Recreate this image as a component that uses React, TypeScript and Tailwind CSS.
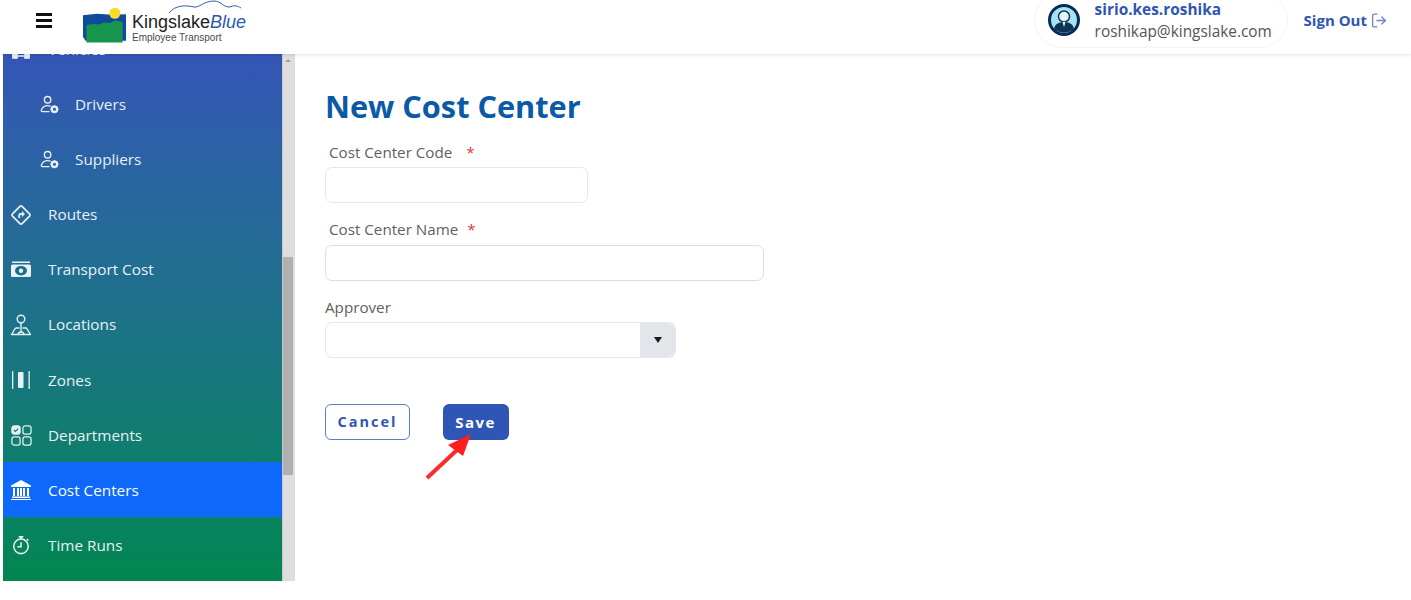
import { LogOut } from 'lucide-react';

function PersonGear() {
  return (
    <svg viewBox="0 0 20 20" className="h-[19px] w-[19px] shrink-0" fill="none" stroke="currentColor" strokeWidth="1.400">
      <circle cx="8" cy="5" r="3.400" />
      <path d="M9.500 17.500H2.600c-1 0-1.500-.7-1.100-1.700C2.400 13.100 5 11.100 8 11.100c1 0 1.900.2 2.700.5" strokeLinecap="round" />
      <circle cx="15.200" cy="15" r="2.800" strokeWidth="2.200" />
      <path d="M15.200 10.700v1.500M15.200 17.800v1.500M10.900 15h1.500M18 15h1.500M12.200 12l1 1M17.200 17l1 1M12.200 18l1-1M17.200 13l1-1" strokeWidth="1.600" />
    </svg>
  );
}

function RouteIcon() {
  return (
    <svg viewBox="0 0 22 22" className="h-[22px] w-[22px]" fill="none" stroke="currentColor" strokeWidth="1.700">
      <rect x="4.200" y="4.200" width="13.600" height="13.600" rx="1.500" transform="rotate(45 11 11)" />
      <path d="M9.200 14v-2.500c0-1 .6-1.500 1.500-1.500H12.500" strokeWidth="1.800" />
      <path d="M12 7l3 3-3 3z" fill="currentColor" stroke="none" />
    </svg>
  );
}

function CostIcon() {
  return (
    <svg viewBox="0 0 22 18" className="h-[18px] w-[22px]" fill="none">
      <rect x="2" y="0.500" width="18" height="1.500" fill="currentColor" />
      <rect x="1" y="3.500" width="20" height="12.500" rx="1.500" fill="currentColor" />
      <ellipse cx="11" cy="9.700" rx="6" ry="4.800" fill="#1d6c8e" />
      <circle cx="11" cy="9.700" r="2.200" fill="currentColor" />
    </svg>
  );
}

function LocationIcon() {
  return (
    <svg viewBox="0 0 22 22" className="h-[22px] w-[22px]" fill="none" stroke="currentColor" strokeWidth="1.400">
      <circle cx="11" cy="5" r="3.800" />
      <path d="M11 9v9" />
      <path d="M5.500 14h4M12.500 14H16.500L20.500 20.500H1.500L5.500 14" strokeLinejoin="round" />
      <path d="M8 20.500c.2-1.500 1.500-2.500 3-2.500s2.800 1 3 2.500" />
    </svg>
  );
}

function ZonesIcon() {
  return (
    <svg viewBox="0 0 22 22" className="h-[22px] w-[22px]" fill="currentColor">
      <rect x="2" y="2" width="1.300" height="18" rx=".5" />
      <rect x="8" y="3" width="5.500" height="16" rx="1" />
      <rect x="18.500" y="2" width="1.300" height="18" rx=".5" />
    </svg>
  );
}

function DeptIcon() {
  return (
    <svg viewBox="0 0 22 22" className="h-[21px] w-[21px]" fill="none" stroke="currentColor" strokeWidth="1.300">
      <rect x="1" y="1" width="8.500" height="8.500" rx="2.200" fill="currentColor" />
      <path d="M3 5.200l1.700 1.600L7.500 3.700" stroke="#177368" strokeWidth="1.200" />
      <rect x="12.500" y="1" width="8.500" height="8.500" rx="2.200" />
      <rect x="1" y="12.500" width="8.500" height="8.500" rx="2.200" />
      <rect x="12.500" y="12.500" width="8.500" height="8.500" rx="2.200" />
    </svg>
  );
}

function BankIcon() {
  return (
    <svg viewBox="0 0 22 22" className="h-[22px] w-[22px]" fill="currentColor">
      <path d="M11 1L21 6.500V8H1V6.500z" />
      <rect x="3" y="9" width="2" height="8" />
      <rect x="7" y="9" width="2" height="8" />
      <rect x="10" y="9" width="2" height="8" />
      <rect x="13" y="9" width="2" height="8" />
      <rect x="17" y="9" width="2" height="8" />
      <rect x="2" y="17.500" width="18" height="1.500" />
      <rect x="1" y="20" width="20" height="1" />
    </svg>
  );
}

function TimerIcon() {
  return (
    <svg viewBox="0 0 22 22" className="h-[20px] w-[20px]" fill="none" stroke="currentColor" strokeWidth="1.700">
      <circle cx="11" cy="12.500" r="8" />
      <path d="M11 8v5H7" />
      <path d="M8.500 2h5M11 2v2.500M17.500 4.500l1.500 1.500" strokeWidth="1.800" />
    </svg>
  );
}

function CartIcon() {
  return (
    <svg viewBox="0 0 22 22" className="h-[22px] w-[22px]" fill="none" stroke="currentColor" strokeWidth="1.600">
      <path d="M3 6v12h16V6" />
      <rect x="3" y="16" width="4" height="4" fill="currentColor" />
      <rect x="15" y="16" width="4" height="4" fill="currentColor" />
    </svg>
  );
}

function Logo() {
  return (
    <div className="flex items-start">
      <svg viewBox="0 0 46 36" className="mt-[7px] h-[36px] w-[45px] shrink-0">
        <path d="M0 8l14-1.500 16 1L44 7v27H2.500L0 30z" fill="#0f4a9c" />
        <path d="M3.500 18l8-1 5 .5 5-2 6 .5 5-2.500 8 1.500V36H3.500z" fill="#18954d" />
        <circle cx="32.500" cy="6" r="5.700" fill="#f9dc2b" />
      </svg>
      <div className="relative ml-[4px] mt-[11px] font-['Liberation_Sans',sans-serif]">
        <svg viewBox="0 0 80 14" className="absolute left-[36px] top-[-11px] h-[14px] w-[80px]" fill="none" stroke="#2f5fa8" strokeWidth="1">
          <path d="M1 13C7 5 18 5 26 7c5 1 10-6 20-6 7 0 9 6 15 6 3 0 4-2 7-1 2 0 3 1 5 2" />
        </svg>
        <div className="flex h-[21px] items-center text-[18px] leading-none text-[#1d1d1d]">
          Kingslake<span className="italic text-[#2c5aa8]">Blue</span>
        </div>
        <div className="text-[10px] leading-[11px] text-[#4a4a4a]">Employee Transport</div>
      </div>
    </div>
  );
}

function Avatar() {
  return (
    <svg viewBox="0 0 32 32" className="h-[32px] w-[32px] shrink-0">
      <circle cx="16" cy="16" r="14.500" fill="#a5e2f2" stroke="#0b2a55" strokeWidth="3" />
      <circle cx="16" cy="12.500" r="5.500" fill="#e6f7fb" stroke="#123a5c" strokeWidth="1.500" />
      <path d="M6 25c1-5 4.500-7 10-7s9 2 10 7c-6 5-14 5-20 0z" fill="#0d3552" />
      <path d="M14.500 18h3L16 23z" fill="#e6f7fb" />
    </svg>
  );
}

const items = [
  { label: 'Drivers', icon: PersonGear, sub: true },
  { label: 'Suppliers', icon: PersonGear, sub: true },
  { label: 'Routes', icon: RouteIcon },
  { label: 'Transport Cost', icon: CostIcon },
  { label: 'Locations', icon: LocationIcon },
  { label: 'Zones', icon: ZonesIcon },
  { label: 'Departments', icon: DeptIcon },
  { label: 'Cost Centers', icon: BankIcon, active: true },
  { label: 'Time Runs', icon: TimerIcon },
];

export default function App() {
  return (
    <div className="flex h-[600px] w-[1411px] flex-col overflow-hidden bg-white font-['Open_Sans',sans-serif]">
      <header className="z-10 flex h-[54px] shrink-0 items-start bg-white pl-[36px] pr-[23px] shadow-[0_1px_3px_rgba(0,0,0,0.12)]">
        <div className="mt-[13px] flex h-[15px] w-[16px] shrink-0 flex-col justify-between">
          <div className="h-[3px] bg-[#111]" />
          <div className="h-[3px] bg-[#111]" />
          <div className="h-[3px] bg-[#111]" />
        </div>
        <div className="ml-[31px]">
          <Logo />
        </div>
        <div className="ml-auto flex items-start">
          <div className="mt-[-8px] flex h-[56px] w-[254px] items-center rounded-full border border-[#f3f3f3] pl-[13px]">
            <Avatar />
            <div className="ml-[15px] mt-[2px]">
              <div className="text-[15.400px] font-bold leading-[21px] text-[#2f56b0]">sirio.kes.roshika</div>
              <div className="text-[15.400px] leading-[23px] text-[#555]">roshikap@kingslake.com</div>
            </div>
          </div>
          <button className="ml-[16px] mt-[10px] flex items-center text-[15px] font-bold leading-[20px] text-[#2f56b0]">
            Sign Out
            <LogOut className="ml-[3px] h-[17px] w-[18px] text-[#6b85c8]" strokeWidth={1.800} />
          </button>
        </div>
      </header>

      <div className="flex h-[527px] shrink-0 pl-[3px]">
        <aside className="flex w-[279px] shrink-0 flex-col overflow-hidden bg-gradient-to-b from-[#3455b6] to-[#028650] text-[15.300px] text-[#e8f1f4]">
          <div className="mt-[-32.500px] flex h-[55px] shrink-0 items-center pl-[7px]">
            <CartIcon />
            <span className="ml-[16px]">Vehicles</span>
          </div>
          {items.map(({ label, icon: Icon, sub, active }) => (
            <div
              key={label}
              className={`flex h-[55.100px] shrink-0 items-center pt-[1px] ${sub ? 'pl-[36px]' : 'pl-[7px]'} ${active ? 'bg-[#0d68fb] text-white' : ''}`}
            >
              <span className={`flex shrink-0 items-center justify-center ${sub ? 'w-[20px]' : 'w-[22px]'}`}>
                <Icon />
              </span>
              <span className="ml-[16px]">{label}</span>
            </div>
          ))}
        </aside>
        <div className="flex w-[13px] shrink-0 flex-col border-l border-[#c9c9c9] bg-[#dedede] pr-[2px]">
          <div className="flex h-[203px] shrink-0 justify-center pt-[5px]">
            <div className="h-0 w-0 border-x-[3px] border-b-[3px] border-x-transparent border-b-[#a0a0a0]" />
          </div>
          <div className="h-[218px] w-[10px] bg-[#b0b0b0]" />
        </div>

        <main className="flex-1 pl-[30px] text-[15.200px] text-[#5f5f5f]">
          <h1 className="mt-[32px] text-[30.700px] font-bold leading-[41px] text-[#0b5aa5]">New Cost Center</h1>

          <label className="mt-[15px] block h-[20px] pl-[4px] leading-[20px]">
            Cost Center Code <span className="ml-[10px] text-[#e0393e]">*</span>
          </label>
          <input className="mt-[5px] block h-[36px] w-[263px] rounded-[7px] border border-[#e6e7ec] bg-white" />

          <label className="mt-[16px] block h-[20px] pl-[4px] leading-[20px]">
            Cost Center Name <span className="ml-[5px] text-[#e0393e]">*</span>
          </label>
          <input className="mt-[6px] block h-[36px] w-[439px] rounded-[7px] border border-[#dcdde6] bg-white" />

          <label className="mt-[16px] block h-[20px] leading-[20px]">Approver</label>
          <div className="mt-[5px] flex h-[36px] w-[351px] overflow-hidden rounded-[7px] border border-[#e6e7ec] bg-white">
            <div className="flex-1" />
            <div className="flex w-[35px] items-center justify-center bg-[#e2e5ea]">
              <div className="h-0 w-0 border-x-[4.500px] border-t-[6px] border-x-transparent border-t-[#1a1a1a]" />
            </div>
          </div>

          <div className="mt-[46px] flex items-start">
            <button className="h-[36px] w-[85px] rounded-[6px] border border-[#5d7cc9] bg-white text-[14.500px] font-bold tracking-[2px] text-[#2f56b0]">
              Cancel
            </button>
            <div className="relative ml-[33px]">
              <button className="h-[36px] w-[66px] rounded-[6px] bg-[#3056b5] pr-[1px] text-[15px] font-bold tracking-[1.500px] text-white">
                Save
              </button>
              <svg viewBox="0 0 50 50" className="absolute left-[-19px] top-[28px] h-[50px] w-[50px]">
                <path d="M3 46L33 18" stroke="#ff2a2a" strokeWidth="4" fill="none" />
                <path d="M47 2L24 13l15 11z" fill="#ff1f1f" />
              </svg>
            </div>
          </div>
        </main>
      </div>
    </div>
  );
}
